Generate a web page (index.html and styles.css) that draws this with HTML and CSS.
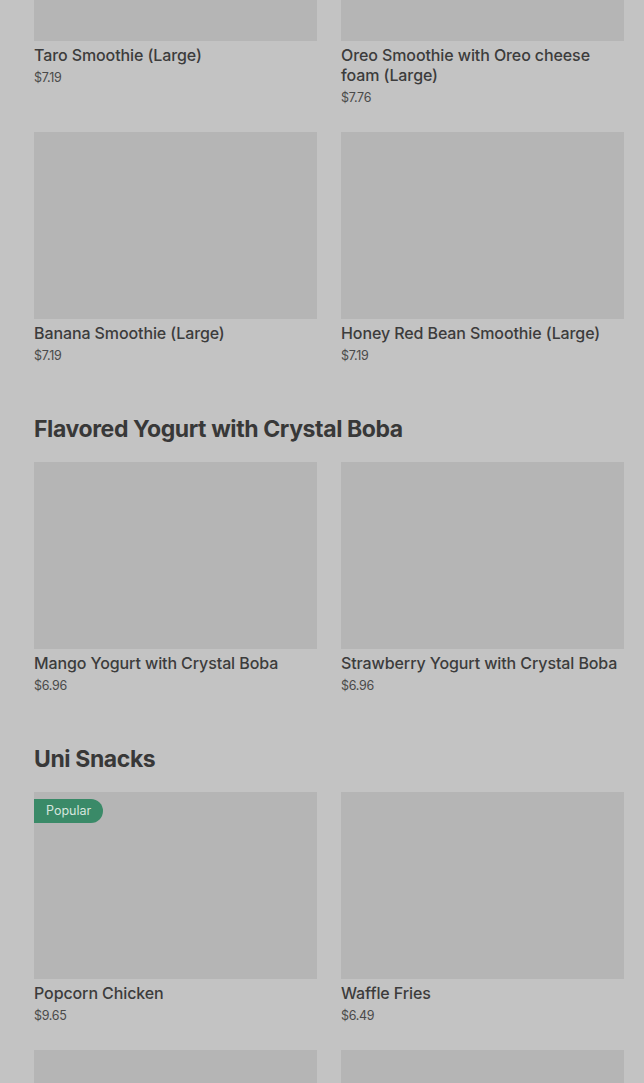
FILE: index.html
```html
<!DOCTYPE html>
<html>
<head>
<meta charset="utf-8">
<link rel="stylesheet" href="styles.css">
</head>
<body>
<main class="menu">
  <section class="section first">
    <div class="grid">
      <div class="card">
        <div class="thumb"></div>
        <div class="name">Taro Smoothie (Large)</div>
        <div class="price">$7.19</div>
      </div>
      <div class="card">
        <div class="thumb"></div>
        <div class="name">Oreo Smoothie with Oreo cheese foam (Large)</div>
        <div class="price">$7.76</div>
      </div>
      <div class="card">
        <div class="thumb"></div>
        <div class="name">Banana Smoothie (Large)</div>
        <div class="price">$7.19</div>
      </div>
      <div class="card">
        <div class="thumb"></div>
        <div class="name">Honey Red Bean Smoothie (Large)</div>
        <div class="price">$7.19</div>
      </div>
    </div>
  </section>
  <section class="section">
    <h2 class="heading">Flavored Yogurt with Crystal Boba</h2>
    <div class="grid">
      <div class="card">
        <div class="thumb"></div>
        <div class="name">Mango Yogurt with Crystal Boba</div>
        <div class="price">$6.96</div>
      </div>
      <div class="card">
        <div class="thumb"></div>
        <div class="name">Strawberry Yogurt with Crystal Boba</div>
        <div class="price">$6.96</div>
      </div>
    </div>
  </section>
  <section class="section">
    <h2 class="heading">Uni Snacks</h2>
    <div class="grid">
      <div class="card">
        <div class="thumb"><span class="badge">Popular</span></div>
        <div class="name">Popcorn Chicken</div>
        <div class="price">$9.65</div>
      </div>
      <div class="card">
        <div class="thumb"></div>
        <div class="name">Waffle Fries</div>
        <div class="price">$6.49</div>
      </div>
      <div class="card">
        <div class="thumb"></div>
      </div>
      <div class="card">
        <div class="thumb"></div>
      </div>
    </div>
  </section>
</main>
</body>
</html>
```
FILE: styles.css
```css
html, body {
  margin: 0;
  padding: 0;
  background: #c3c3c3;
  overflow: hidden;
}
body {
  font-family: Inter, "Liberation Sans", sans-serif;
  color: #3a3a3a;
}
.menu {
  padding: 0 20px 0 34px;
}
.section {
  padding-top: 48px;
}
.section.first {
  padding-top: 0;
  margin-top: -146px;
}
.heading {
  margin: 0 0 17px;
  font-size: 23px;
  line-height: 32px;
  font-weight: 700;
  letter-spacing: -0.4px;
  color: #383838;
}
.grid {
  display: grid;
  grid-template-columns: 283px 283px;
  column-gap: 24px;
  row-gap: 25px;
}
.card {
  display: flex;
  flex-direction: column;
}
.thumb {
  position: relative;
  height: 187px;
  background: #b5b5b5;
}
.name {
  margin-top: 4px;
  font-size: 16px;
  line-height: 20px;
  font-weight: 500;
  color: #3c3c3c;
  letter-spacing: -0.1px;
}
.price {
  margin-top: 4px;
  font-size: 12.5px;
  line-height: 18px;
  color: #4a4a4a;
  letter-spacing: -0.3px;
}
.badge {
  position: absolute;
  left: 0;
  top: 7px;
  height: 24px;
  padding: 0 12px;
  line-height: 24px;
  font-size: 12.5px;
  color: #d6e6de;
  background: #3a8a68;
  border-radius: 0 12px 12px 0;
}
```
